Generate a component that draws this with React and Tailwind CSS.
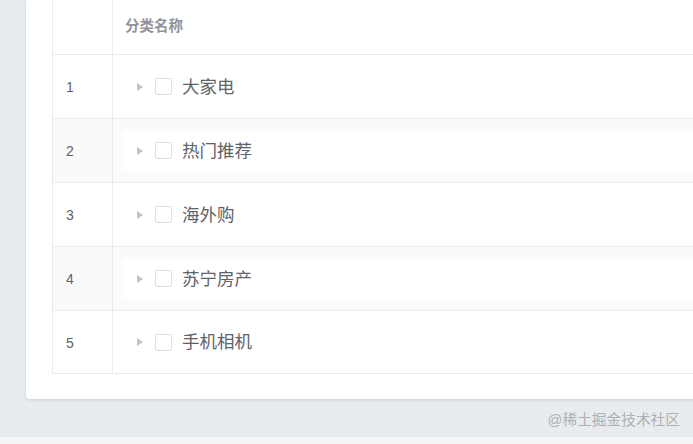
import React from 'react';

const rows = ['大家电', '热门推荐', '海外购', '苏宁房产', '手机相机'];

function TreeNode({ label, striped }) {
    return (
        <div
            className={`flex h-[34px] items-center pl-[12px] ${
                striped ? 'bg-white shadow-[0_0_6px_4px_#ffffff]' : ''
            }`}
        >
            <span className="mr-[12px] h-0 w-0 border-y-[4.5px] border-l-[6px] border-y-transparent border-l-[#c0c4cc]" />
            <span className="mr-[10px] h-[17px] w-[17px] rounded-[2px] border border-[#dcdfe6] bg-white" />
            <span className="pt-[1px] text-[17.5px] text-[#5f6266]">{label}</span>
        </div>
    );
}

export default function App() {
    return (
        <div
            className="relative h-[444px] w-[693px] overflow-hidden bg-[#e9ecef]"
            style={{ fontFamily: '"Liberation Sans", "Noto Sans CJK SC", sans-serif' }}
        >
            <div className="ml-[26px] w-[720px] rounded-b-[4px] bg-white px-[26px] pb-[25px] shadow-[0_1px_3px_rgba(0,0,0,0.12)]">
                <div className="border-b border-l border-[#ebebeb]">
                    <div className="flex h-[55px] border-b border-[#ebebeb]">
                        <div className="w-[60px] shrink-0 border-r border-[#ebebeb]" />
                        <div className="flex items-center pl-[12px] text-[14.5px] font-bold text-[#909399]">
                            分类名称
                        </div>
                    </div>
                    {rows.map((label, i) => (
                        <div
                            key={label}
                            className={`flex ${
                                i < rows.length - 1 ? 'h-[64px] border-b border-[#ebebeb]' : 'h-[62px]'
                            } ${i % 2 === 1 ? 'bg-[#fafafa]' : 'bg-white'}`}
                        >
                            <div className="flex w-[60px] shrink-0 items-center border-r border-[#ebebeb] pl-[13px] pt-[2px] text-[14px] text-[#606266]">
                                {i + 1}
                            </div>
                            <div className="flex flex-1 items-center pl-[12px]">
                                <div className="flex-1">
                                    <TreeNode label={label} striped={i % 2 === 1} />
                                </div>
                            </div>
                        </div>
                    ))}
                </div>
            </div>
            <div className="mt-[10px] flex justify-end pr-[13px] text-[14.7px] text-[#adb0b5]">
                @稀土掘金技术社区
            </div>
            <div className="absolute bottom-0 left-0 h-[7px] w-full bg-[#f4f5f7]" />
        </div>
    );
}
